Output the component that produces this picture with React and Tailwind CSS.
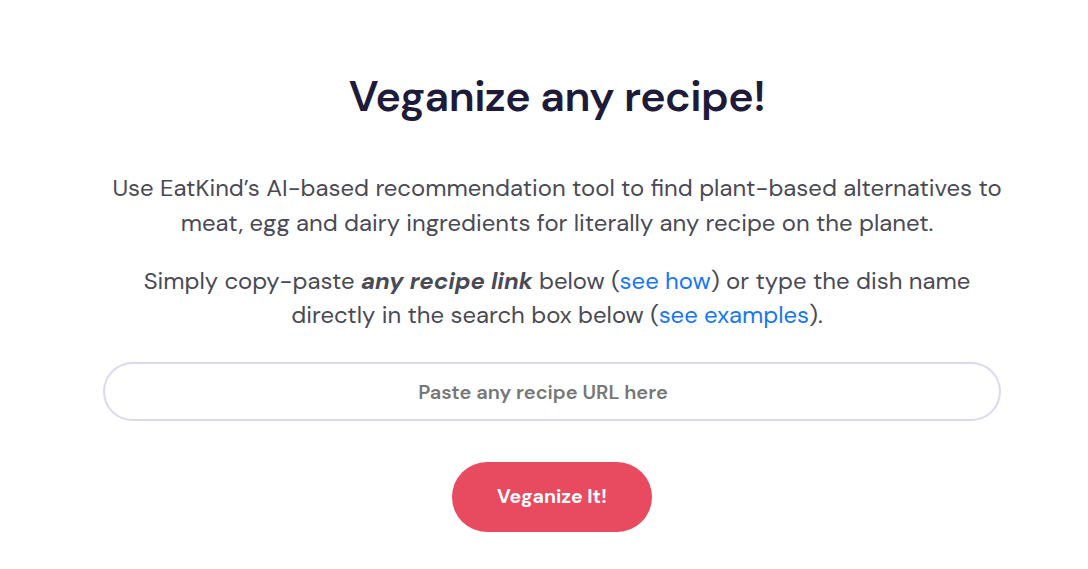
export default function App() {
  return (
    <div className="min-h-[569px] w-full bg-white pl-4" style={{ fontFamily: '"DM Sans", Inter, "Noto Sans", sans-serif' }}>
      <div className="mx-auto flex w-[898px] flex-col items-center pt-[70px]">
        <h1 className="ml-[10px] text-[43px] font-semibold leading-[52px] text-[#1e1b3a] tracking-[-0.5px]">Veganize any recipe!</h1>
        <p className="ml-[10px] mt-[48px] w-[910px] shrink-0 text-center text-[23.9px] leading-[35px] text-[#4a4a55]">
          Use EatKind’s AI-based recommendation tool to find plant-based alternatives to meat, egg and dairy ingredients for literally any recipe on the planet.
        </p>
        <p className="ml-[10px] mt-[24px] w-[866px] text-center text-[23.9px] leading-[34px] text-[#4a4a55]">
          Simply copy-paste <b className="font-bold italic">any recipe link</b> below (<a className="text-[#1877f2]" href="#">see how</a>) or type the dish name directly in the search box below (<a className="text-[#1877f2]" href="#">see examples</a>).
        </p>
        <input
          className="mt-[30px] h-[59px] w-full rounded-full border-2 border-[#dcd9ef] pr-[18px] text-center text-[20px] font-semibold outline-none placeholder:text-[#777777]"
          placeholder="Paste any recipe URL here"
        />
        <button className="mt-[41px] h-[70px] w-[200px] rounded-full bg-[#e84a5f] text-[19.5px] font-bold text-white">Veganize It!</button>
      </div>
    </div>
  );
}
